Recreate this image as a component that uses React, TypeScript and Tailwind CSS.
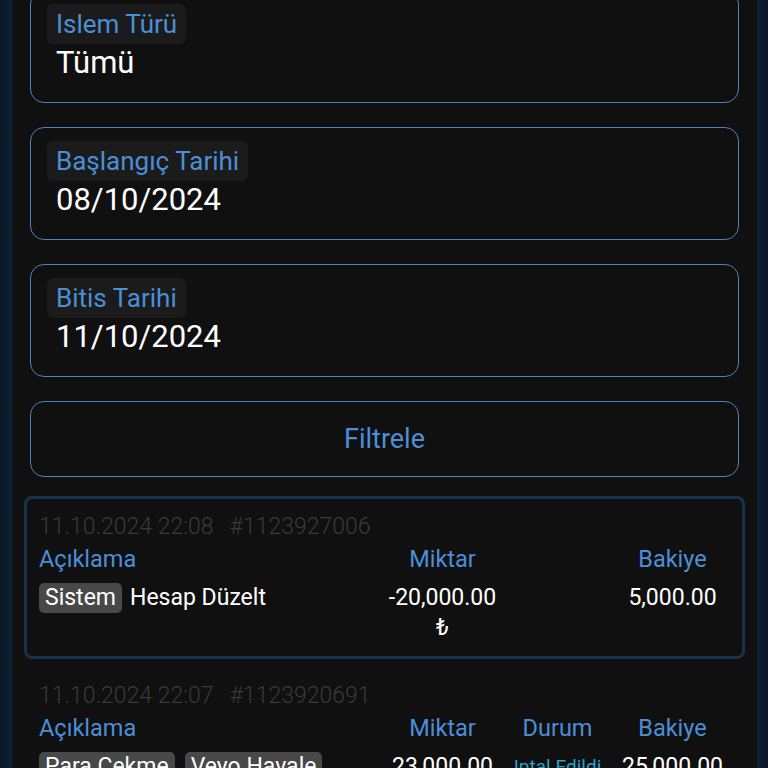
import React from 'react';

type Field = { label: string; value: string };
type Row = {
  date: string;
  id: string;
  tags: string[];
  note?: string;
  amount: string;
  status?: string;
  balance: string;
  framed?: boolean;
};

const fields: Field[] = [
  { label: 'Islem Türü', value: 'Tümü' },
  { label: 'Başlangıç Tarihi', value: '08/10/2024' },
  { label: 'Bitis Tarihi', value: '11/10/2024' },
];

const rows: Row[] = [
  {
    date: '11.10.2024 22:08',
    id: '#1123927006',
    tags: ['Sistem'],
    note: 'Hesap Düzelt',
    amount: '-20,000.00',
    balance: '5,000.00',
    framed: true,
  },
  {
    date: '11.10.2024 22:07',
    id: '#1123920691',
    tags: ['Para Çekme', 'Veyo Havale'],
    amount: '23,000.00',
    status: 'Iptal Edildi',
    balance: '25,000.00',
  },
];

const FilterField = ({ label, value }: Field) => (
  <div className="h-[113px] shrink-0 rounded-[14px] border-[1.5px] border-[#4a82c8] pl-[16px] pt-[13px]">
    <span className="inline-block h-[40px] rounded-md bg-[#1b1b1b] px-[9px] text-[26px] leading-[40px] text-[#4a8fd8]">
      {label}
    </span>
    <div className="mt-[2px] pl-[9px] text-[31px] leading-[34px] text-white">{value}</div>
  </div>
);

const TxCard = ({ row }: { row: Row }) => (
  <div
    className={
      'rounded-[8px] border-[3px] px-[12px] pb-[13px] pt-[14px] ' +
      (row.framed ? 'border-[#17324a]' : 'border-transparent')
    }
  >
    <div className="flex gap-[16px] text-[23px] font-light leading-[28px] text-[#3a3a3a]">
      <span>{row.date}</span>
      <span>{row.id}</span>
    </div>

    <div className="mt-[4px] grid grid-cols-[1fr_115px_115px_115px] text-[23.5px] leading-[28px] text-[#4a8fd8]">
      <span>Açıklama</span>
      <span className="text-center">Miktar</span>
      <span className="text-center">{row.status ? 'Durum' : ''}</span>
      <span className="text-center">Bakiye</span>
    </div>

    <div className="mt-[10px] grid grid-cols-[1fr_115px_115px_115px] text-[23px] leading-[30px] text-white">
      <div className="flex flex-wrap items-start gap-x-[10px] gap-y-[8px]">
        {row.tags.map((t) => (
          <span key={t} className="h-[30px] rounded-[5px] bg-[#484848] px-[6px] leading-[30px]">
            {t}
          </span>
        ))}
        {row.note && <span className="-ml-[2px]">{row.note}</span>}
      </div>
      <div className="flex flex-col items-center">
        <span>{row.amount}</span>
        <span>₺</span>
      </div>
      <span className="text-center text-[19px] text-[#24a4c8]">{row.status}</span>
      <span className="text-center">{row.balance}</span>
    </div>
  </div>
);

export default function App() {
  return (
    <div
      className="flex h-[768px] w-[768px] overflow-hidden bg-[#101010]"
      style={{ fontFamily: 'Roboto, "Noto Sans", "DejaVu Sans", sans-serif' }}
    >
      <div className="w-[12px] shrink-0 bg-gradient-to-r from-[#0a1726] to-[#0d2237]" />

      <div className="flex min-w-0 flex-1 flex-col">
        <div className="-mt-[10px] flex flex-col gap-[24px] px-[18px]">
          {fields.map((f) => (
            <FilterField key={f.label} {...f} />
          ))}
          <button className="h-[76px] shrink-0 rounded-[14px] border-[1.5px] border-[#4a82c8] text-[27px] text-[#4a8fd8]">
            Filtrele
          </button>
        </div>

        <div className="mt-[19px] flex flex-col gap-[6px] px-[12px]">
          {rows.map((r) => (
            <TxCard key={r.id} row={r} />
          ))}
        </div>
      </div>

      <div className="w-[11px] shrink-0 bg-gradient-to-l from-[#0a1726] to-[#0d2237]" />
    </div>
  );
}
